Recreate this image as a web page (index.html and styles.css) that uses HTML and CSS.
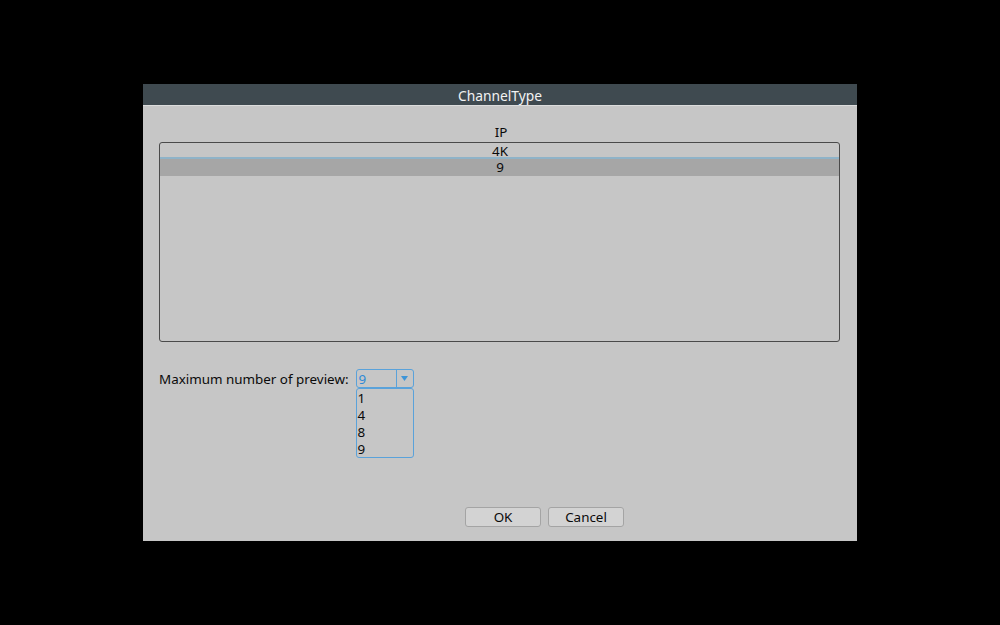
FILE: index.html
```html
<!DOCTYPE html>
<html lang="en">
<head>
    <meta charset="UTF-8">
    <title>ChannelType</title>
    <link rel="stylesheet" href="styles.css">
</head>
<body>
    <div class="dialog">
        <div class="title-bar">ChannelType</div>
        <div class="dialog-body">
            <div class="list-head">IP</div>
            <div class="list-box">
                <div class="list-row">4K</div>
                <div class="list-row selected">9</div>
            </div>

            <div class="preview-row">
                <span class="preview-label">Maximum number of preview:</span>
                <div class="combo">
                    <div class="combo-box">
                        <span class="combo-value">9</span>
                        <span class="combo-arrow">
                            <svg width="7" height="5" viewBox="0 0 7 5"><path d="M0 0H7L3.5 5Z" fill="#3d95d8"/></svg>
                        </span>
                    </div>
                    <div class="combo-list">
                        <div>1</div>
                        <div>4</div>
                        <div>8</div>
                        <div>9</div>
                    </div>
                </div>
            </div>

            <div class="buttons">
                <button class="btn">OK</button>
                <button class="btn">Cancel</button>
            </div>
        </div>
    </div>
</body>
</html>
```

FILE: styles.css
```css
* {
box-sizing: border-box;
}

body {
margin: 0;
width: 1000px;
height: 625px;
background-color: #000000;
font-family: "Noto Sans", "Open Sans", sans-serif;
font-size: 13.4px;
color: #0a0a0a;
padding: 84px 0 0 143px;
}

.dialog {
width: 714px;
height: 457px;
background-color: #c6c6c6;
display: flex;
flex-direction: column;
}

.title-bar {
height: 22px;
background-color: #3f4a50;
color: #f2f2f2;
text-align: center;
font-size: 13.8px;
line-height: 24px;
border-bottom: 1px solid #dcdcdc;
}

.dialog-body {
flex: 1;
padding: 16px 17px 0 16px;
display: flex;
flex-direction: column;
}

.list-head {
text-align: center;
height: 20px;
line-height: 20px;
padding-left: 3px;
}

.list-box {
height: 200px;
border: 1px solid #4a4a4a;
border-radius: 3px;
overflow: hidden;
}

.list-row {
height: 16px;
line-height: 16px;
text-align: center;
padding-left: 1px;
}

.list-row:first-child {
height: 16px;
line-height: 16px;
border-bottom: 2px solid #8fb3c8;
}

.list-row.selected {
height: 17px;
line-height: 17px;
background-color: #a6a6a6;
}

.preview-row {
display: flex;
align-items: flex-start;
margin-top: 27px;
height: 120px;
}

.preview-label {
line-height: 20px;
margin-right: 7px;
}

.combo {
width: 58px;
position: relative;
}

.combo-box {
height: 19px;
border: 1px solid #5aa2da;
border-radius: 3px;
display: flex;
}

.combo-value {
flex: 1;
color: #2f8ad6;
line-height: 18px;
padding-left: 2px;
}

.combo-arrow {
width: 17px;
border-left: 1px solid #5aa2da;
display: flex;
align-items: center;
justify-content: center;
}

.combo-list {
position: absolute;
top: 19px;
left: 0;
width: 58px;
height: 70px;
border: 1px solid #5aa2da;
border-radius: 3px;
padding: 1px 0 0 1px;
}

.combo-list div {
height: 17px;
line-height: 17px;
}

.buttons {
display: flex;
gap: 7px;
margin-top: 18px;
padding-left: 306px;
}

.btn {
width: 76px;
height: 20px;
background-color: #d3d3d3;
border: 1px solid #a4a4a4;
border-radius: 3px;
font-family: "Noto Sans", "Open Sans", sans-serif;
font-size: 13.4px;
color: #0a0a0a;
padding: 0;
line-height: 18px;
}
```
